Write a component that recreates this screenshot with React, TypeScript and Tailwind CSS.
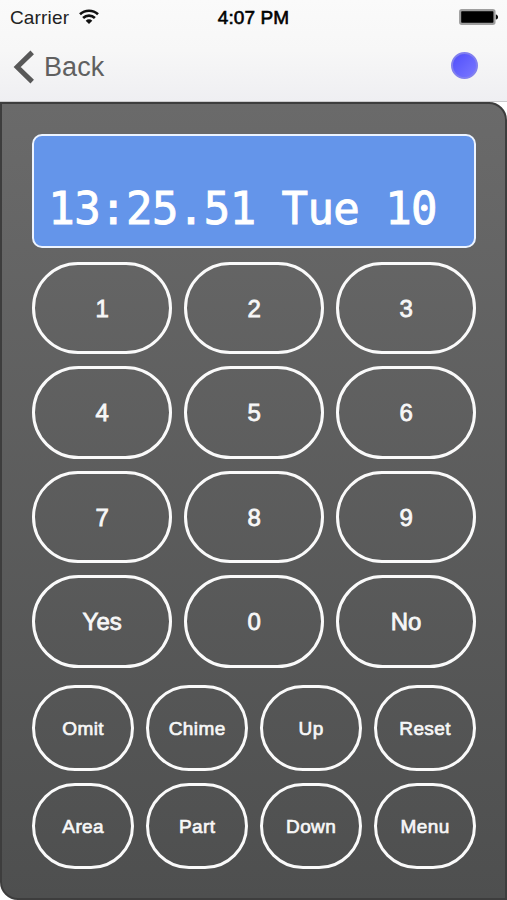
import clsx from 'clsx';

const DIGIT_KEYS = ['1', '2', '3', '4', '5', '6', '7', '8', '9', 'Yes', '0', 'No'];
const FUNCTION_KEYS = ['Omit', 'Chime', 'Up', 'Reset', 'Area', 'Part', 'Down', 'Menu'];

const WifiIcon = () => (
  <svg className="mb-0.5 ml-[10px] h-[15px] w-5" viewBox="0 0 20 15" fill="none" stroke="#111" strokeWidth="2.6">
    <path d="M1 5.3a13 13 0 0 1 18 0" />
    <path d="M4.1 9a8.4 8.4 0 0 1 11.8 0" />
    <path d="M6.7 11.7a4.7 4.7 0 0 1 6.6 0L10 15z" fill="#111" stroke="none" />
  </svg>
);

const BatteryIcon = () => (
  <svg className="mb-0.5 h-4 w-10" viewBox="0 0 40 16">
    <rect x="0.8" y="0.8" width="35" height="14.4" rx="2" fill="#9a9a9a" stroke="#9f9f9f" strokeWidth="1.5" />
    <rect x="2.2" y="2.2" width="32.2" height="11.6" rx="0.8" fill="#000" />
    <path d="M36.8 5.4c3 .5 3 4.7 0 5.2z" fill="#111" />
  </svg>
);

const StatusBar = () => (
  <div className="grid h-[34px] grid-cols-3 items-center pt-px text-[19px] leading-none">
    <div className="flex items-center pl-[10px] text-[#222]">
      <span className="tracking-[0.15px]">Carrier</span>
      <WifiIcon />
    </div>
    <span className="text-center tracking-[0.1px] text-black [-webkit-text-stroke:0.6px_black]">4:07 PM</span>
    <div className="flex justify-end pr-2">
      <BatteryIcon />
    </div>
  </div>
);

const NavBar = () => (
  <div className="flex h-[67px] items-center justify-between pr-7 pl-[13px]">
    <button type="button" className="flex items-center text-[27px] leading-none tracking-[0.1px] text-[#606060]">
      <svg className="mr-[10px] mb-[2px] h-[34px] w-[21px]" viewBox="0 0 21 34" fill="none" stroke="#585858" strokeWidth="5">
        <path d="M19.2 2.4 4.2 17l15 14.6" />
      </svg>
      Back
    </button>
    <span className="mr-px mb-1 size-[27px] rounded-full border-2 border-[#8280ee] bg-linear-to-br from-[#514dfb] to-[#7b77ff]" />
  </div>
);

const Key = ({ label, small }: { label: string; small?: boolean }) => (
  <button
    type="button"
    className={clsx(
      'flex items-center justify-center rounded-full border-[3px] border-[#fafafa] leading-none text-[#f7f7f7]',
      small
        ? 'h-[86px] pt-px text-[19px] tracking-[0.4px] [-webkit-text-stroke:0.65px_#f7f7f7]'
        : 'h-[92.3px] pt-px text-[24px] [-webkit-text-stroke:0.8px_#f7f7f7]',
    )}
  >
    {label}
  </button>
);

const Display = () => (
  <div className="flex h-[114.5px] items-end rounded-[10px] border-2 border-[#edf4ff] bg-[#6495ea] pb-3 pl-[14px]">
    <span className="font-['DejaVu_Sans_Mono',monospace] text-[44px] leading-[50px] tracking-[-0.58px] whitespace-pre text-white [-webkit-text-stroke:0.9px_white]">
      13:25.51 Tue 10
    </span>
  </div>
);

export default function App() {
  return (
    <div className="flex h-[900px] w-[507px] flex-col overflow-hidden bg-white font-['Liberation_Sans',Arial,sans-serif]">
      <header className="h-[102px] shrink-0 border-b border-[#c9c9cb] bg-linear-to-b from-[#fafafa] via-[#f7f7f7] to-[#efeff2]">
        <StatusBar />
        <NavBar />
      </header>

      <main className="flex flex-1 flex-col rounded-tr-[18px] rounded-bl-[18px] border-2 border-[#3d3d3d] bg-linear-to-b from-[#6a6a6a] to-[#4e4f4f] pt-[29.5px] pr-[29px] pl-[30.3px]">
        <Display />
        <div className="mt-[14px] grid grid-cols-3 gap-x-[12.2px] gap-y-[12.2px]">
          {DIGIT_KEYS.map((label) => (
            <Key key={label} label={label} />
          ))}
        </div>
        <div className="mt-[17px] grid grid-cols-4 gap-x-[12.2px] gap-y-[12.2px]">
          {FUNCTION_KEYS.map((label) => (
            <Key key={label} label={label} small />
          ))}
        </div>
      </main>
    </div>
  );
}
